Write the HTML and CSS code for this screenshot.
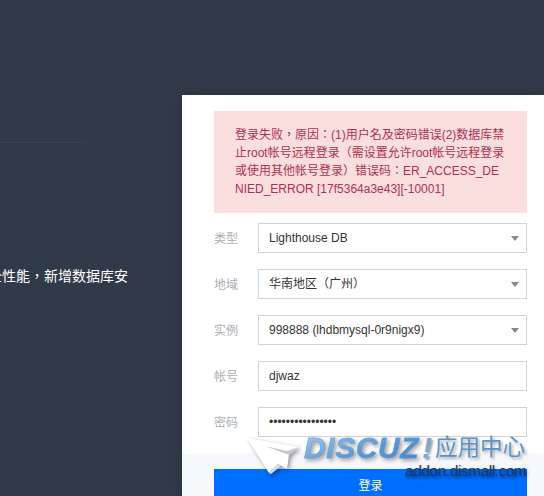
FILE: index.html
```html
<!DOCTYPE html>
<html lang="zh-TW">
<head>
    <meta charset="UTF-8">
    <meta name="viewport" content="width=device-width, initial-scale=1.0">
    <title>登录</title>
    <link rel="stylesheet" href="styles.css">
</head>
<body>
    <div class="page">
        <div class="intro">
            <div class="intro-line"></div>
            <p class="intro-text">全性能，新增数据库安</p>
        </div>

        <div class="card">
            <form class="login-form">
                <div class="alert">登录失败，原因：(1)用户名及密码错误(2)数据库禁止root帐号远程登录（需设置允许root帐号远程登录或使用其他帐号登录）错误码：ER_ACCESS_DENIED_ERROR [17f5364a3e43][-10001]</div>

                <div class="row">
                    <label class="row-label">类型</label>
                    <div class="select-box">
                        <select class="field"><option>Lighthouse DB</option></select>
                        <span class="arrow"></span>
                    </div>
                </div>
                <div class="row">
                    <label class="row-label">地域</label>
                    <div class="select-box">
                        <select class="field"><option>华南地区（广州）</option></select>
                        <span class="arrow"></span>
                    </div>
                </div>
                <div class="row">
                    <label class="row-label">实例</label>
                    <div class="select-box">
                        <select class="field"><option>998888 (lhdbmysql-0r9nigx9)</option></select>
                        <span class="arrow"></span>
                    </div>
                </div>
                <div class="row">
                    <label class="row-label">帐号</label>
                    <input class="field" type="text" value="djwaz">
                </div>
                <div class="row">
                    <label class="row-label">密码</label>
                    <input class="field" type="password" value="abcdefghijklmnop">
                </div>
            </form>
            <div class="card-footer">
                <button class="submit" type="button">登录</button>
            </div>
        </div>
    </div>

    <!-- watermark over the bottom right corner -->
    <div class="watermark">
        <svg class="plane" width="56" height="44" viewBox="0 0 56 44">
            <polygon points="0,2 52,11 42,19 40,33 31,28 22,37" fill="#ffffff"/>
            <polygon points="18,10 40,15 52,11 42,19" fill="#c6c9cd"/>
            <polygon points="22,37 31,28 34,30 24,38" fill="#cfe0f5"/>
        </svg>
        <span class="wm-brand">DISCUZ</span>
        <span class="wm-bang">!</span>
        <span class="wm-cn">应用中心</span>
        <span class="wm-url">addon.dismall.com</span>
    </div>
</body>
</html>
```

FILE: styles.css
```css
html, body {
    margin: 0;
    padding: 0;
    height: 100%;
    overflow: hidden;
}

body {
    font-family: "Liberation Sans", "Noto Sans CJK TC", sans-serif;
    font-size: 12px;
    background-color: #303a48;
    color: #333;
}

.page {
    display: flex;
    min-height: 496px;
}

.intro {
    width: 182px;
    flex-shrink: 0;
    overflow: hidden;
    padding-top: 142px;
    box-sizing: border-box;
}

.intro-line {
    width: 86px;
    height: 1px;
    background-color: #384250;
}

.intro-text {
    margin: 124px 0 0 -12px;
    font-size: 14px;
    line-height: 18px;
    color: #fff;
    white-space: nowrap;
}

.card {
    flex: 1;
    margin-top: 95px;
    background-color: #fff;
    box-shadow: 0 0 16px rgba(0, 0, 0, 0.12);
    display: flex;
    flex-direction: column;
}

.login-form {
    padding: 16px 17px 0 32px;
}

.alert {
    background-color: #fbdfdf;
    color: #b0304f;
    padding: 15px 21px;
    line-height: 18px;
    margin-bottom: 10px;
    word-break: break-all;
}

.row {
    display: flex;
    align-items: center;
    height: 30px;
    margin-bottom: 16px;
}

.row-label {
    width: 44px;
    flex-shrink: 0;
    padding-bottom: 2px;
    color: #aaaeb3;
}

.select-box {
    position: relative;
    flex: 1;
    height: 30px;
}

.field {
    display: block;
    width: 100%;
    flex: 1;
    height: 30px;
    box-sizing: border-box;
    padding: 0 10px;
    border: 1px solid #ced3de;
    border-radius: 0;
    background-color: #fff;
    color: #333;
    font-family: inherit;
    font-size: 12px;
    appearance: none;
    outline: none;
}

.arrow {
    position: absolute;
    right: 8px;
    top: 13px;
    width: 0;
    height: 0;
    border-left: 4px solid transparent;
    border-right: 4px solid transparent;
    border-top: 5px solid #888;
}

.card-footer {
    flex: 1;
    background-color: #f6f8fb;
    margin-top: 0;
    padding: 16px 17px 0 32px;
}

.submit {
    display: block;
    width: 100%;
    height: 30px;
    border: none;
    background-color: #006eff;
    color: #fff;
    font-family: inherit;
    font-size: 12px;
}

.watermark {
    position: absolute;
    left: 247px;
    top: 436px;
    width: 290px;
    height: 60px;
    pointer-events: none;
}

.plane {
    position: absolute;
    left: 0;
    top: 0;
    filter: drop-shadow(2px 2px 2px rgba(0, 0, 0, 0.4));
}

.wm-brand {
    position: absolute;
    left: 57px;
    top: -3px;
    font-size: 30px;
    line-height: 30px;
    font-weight: bold;
    font-style: italic;
    letter-spacing: 0.6px;
    color: transparent;
    background: linear-gradient(160deg, #a9cbec, #5a97d6 55%, #4f86c4);
    -webkit-background-clip: text;
    background-clip: text;
    -webkit-text-stroke: 0.4px #5f9bd8;
    filter: drop-shadow(2px 2px 2px rgba(0, 0, 0, 0.4));
}

.wm-bang {
    position: absolute;
    left: 175px;
    top: -3px;
    font-size: 30px;
    line-height: 30px;
    font-weight: bold;
    font-style: italic;
    color: #7fa9d4;
    text-shadow: 2px 2px 2px rgba(0, 0, 0, 0.35);
}

.wm-cn {
    position: absolute;
    left: 188px;
    top: -2px;
    font-size: 22.5px;
    line-height: 28px;
    color: #5b94ca;
    text-shadow: 2px 2px 3px rgba(0, 0, 0, 0.35);
    white-space: nowrap;
}

.wm-url {
    position: absolute;
    left: 158px;
    top: 27px;
    font-size: 15.5px;
    line-height: 16px;
    letter-spacing: -0.45px;
    color: #17396b;
    text-shadow: 1px 2px 3px rgba(0, 0, 0, 0.5);
    white-space: nowrap;
}
```
